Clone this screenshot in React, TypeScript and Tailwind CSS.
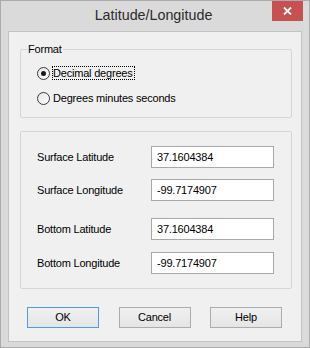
import React from "react";

const font = { fontFamily: '"Liberation Sans", Arial, sans-serif' };

function Radio({ checked, label, focused }: { checked?: boolean; label: string; focused?: boolean }) {
  return (
    <div className="flex items-center h-[16px]">
      <span className="w-[13px] h-[13px] rounded-full border border-[#3a3a3a] bg-gradient-to-br from-[#e6e6e6] to-[#ffffff] flex items-center justify-center shrink-0">
        {checked && <span className="w-[5px] h-[5px] rounded-full bg-[#1a1a1a]" />}
      </span>
      <span
        className={
          "ml-[2px] pr-[1px] leading-[13px] h-[14px] flex items-center " +
          (focused ? "border border-dotted border-black" : "border border-transparent")
        }
      >
        {label}
      </span>
    </div>
  );
}

function Field({ label, value }: { label: string; value: string }) {
  return (
    <div className="flex items-center h-[22px]">
      <span className="w-[130px] pl-[16px]">{label}</span>
      <div className="w-[123px] h-[22px] bg-white border border-[#a8a8a8] flex items-center pl-[5px]">
        {value}
      </div>
    </div>
  );
}

function Btn({ label, primary }: { label: string; primary?: boolean }) {
  return (
    <div
      className={
        "w-[72px] h-[21px] flex items-center justify-center bg-gradient-to-b from-[#f0f0f0] to-[#e5e5e5] border " +
        (primary ? "border-[#4d9ae6]" : "border-[#acacac]")
      }
    >
      {label}
    </div>
  );
}

export default function App() {
  return (
    <div
      className="w-[310px] h-[348px] bg-[#dadada] border border-[#ababab] flex flex-col text-[11px] tracking-[-0.2px] text-black"
      style={font}
    >
      <div className="h-[30px] relative flex items-center justify-center">
        <span className="text-[14.3px] tracking-normal text-[#2b2b2b] mr-[3px]">Latitude/Longitude</span>
        <div className="absolute right-[6px] top-0 w-[31px] h-[20px] bg-[#c75050] flex items-center justify-center">
          <svg width="9" height="8" viewBox="0 0 9 8">
            <path d="M1 0.5 L8 7.5 M8 0.5 L1 7.5" stroke="#ffffff" strokeWidth="1.8" />
          </svg>
        </div>
      </div>
      <div className="mx-[7px] h-[311px] bg-[#f0f0f0] border border-[#c3c3c3] flex flex-col pl-[11px]">
        <div className="relative mt-[17px] w-[272px] h-[69px] border border-[#d5d5d5] rounded-[2px] pl-[16px] pt-[15px] flex flex-col gap-[9px]">
          <span className="absolute left-[6px] -top-[8px] px-[1px] bg-[#f0f0f0] leading-[14px]">Format</span>
          <Radio checked focused label="Decimal degrees" />
          <Radio label="Degrees minutes seconds" />
        </div>
        <div className="mt-[13px] w-[272px] h-[158px] border border-[#d5d5d5] rounded-[2px] pt-[14px] flex flex-col">
          <Field label="Surface Latitude" value="37.1604384" />
          <div className="h-[11px]" />
          <Field label="Surface Longitude" value="-99.7174907" />
          <div className="h-[17px]" />
          <Field label="Bottom Latitude" value="37.1604384" />
          <div className="h-[12px]" />
          <Field label="Bottom Longitude" value="-99.7174907" />
        </div>
        <div className="mt-[18px] flex pl-[7px] gap-[19.5px]">
          <Btn label="OK" primary />
          <Btn label="Cancel" />
          <Btn label="Help" />
        </div>
      </div>
    </div>
  );
}
